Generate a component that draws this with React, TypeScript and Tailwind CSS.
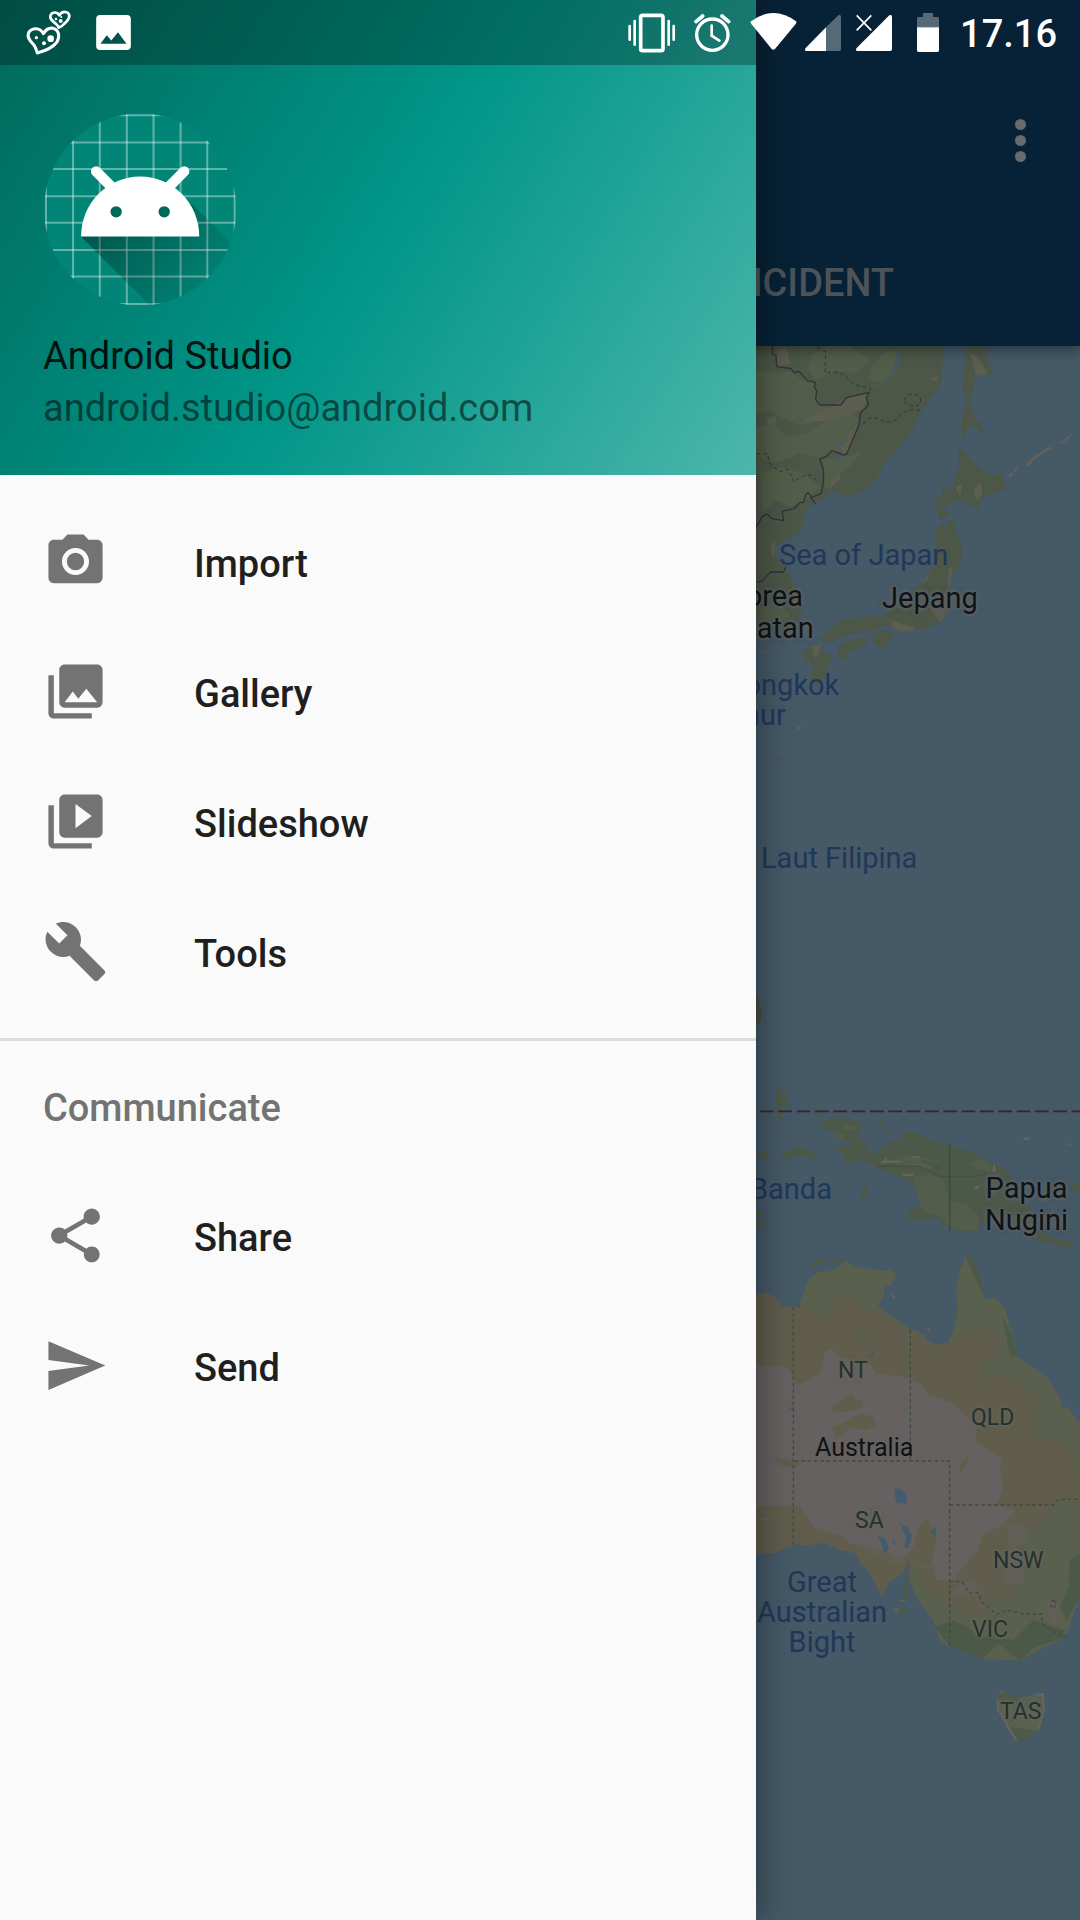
import React from "react";

const menuMain = [
  {
    label: "Import",
    d: "M12 8.8a3.2 3.2 0 1 0 0 6.4 3.2 3.2 0 0 0 0-6.4zM9 2L7.17 4H4c-1.1 0-2 .9-2 2v12c0 1.1.9 2 2 2h16c1.1 0 2-.9 2-2V6c0-1.1-.9-2-2-2h-3.17L15 2H9zm3 15c-2.76 0-5-2.24-5-5s2.24-5 5-5 5 2.24 5 5-2.24 5-5 5z",
  },
  {
    label: "Gallery",
    d: "M22 16V4c0-1.1-.9-2-2-2H8c-1.1 0-2 .9-2 2v12c0 1.1.9 2 2 2h12c1.1 0 2-.9 2-2zM11 12l2.03 2.71L16 11l4 5H8l3-4zM2 6v14c0 1.1.9 2 2 2h14v-2H4V6H2z",
  },
  {
    label: "Slideshow",
    d: "M4 6H2v14c0 1.1.9 2 2 2h14v-2H4V6zM20 2H8c-1.1 0-2 .9-2 2v12c0 1.1.9 2 2 2h12c1.1 0 2-.9 2-2V4c0-1.1-.9-2-2-2zM12 14.5v-9l6 4.5-6 4.5z",
  },
  {
    label: "Tools",
    d: "M22.7 19l-9.1-9.1c.9-2.3.4-5-1.5-6.9-2-2-5-2.4-7.4-1.3L9 6 6 9 1.6 4.7C.4 7.1.9 10.1 2.9 12.1c1.9 1.9 4.6 2.4 6.9 1.5l9.1 9.1c.4.4 1 .4 1.4 0l2.3-2.3c.5-.4.5-1.1.1-1.4z",
  },
];

const menuCommunicate = [
  {
    label: "Share",
    d: "M18 16.08c-.76 0-1.44.3-1.96.77L8.91 12.7c.05-.23.09-.46.09-.7s-.04-.47-.09-.7l7.05-4.11c.54.5 1.25.81 2.04.81 1.66 0 3-1.34 3-3s-1.34-3-3-3-3 1.34-3 3c0 .24.04.47.09.7L8.04 9.81C7.5 9.31 6.79 9 6 9c-1.66 0-3 1.34-3 3s1.34 3 3 3c.79 0 1.5-.31 2.04-.81l7.12 4.16c-.05.21-.08.43-.08.65 0 1.61 1.31 2.92 2.92 2.92s2.92-1.31 2.92-2.92-1.31-2.92-2.92-2.92z",
  },
  { label: "Send", d: "M2.01 21L23 12 2.01 3 2 10l15 2-15 2z" },
];

function MenuItem({ label, d }: { label: string; d: string }) {
  return (
    <li>
      <a href="#" className="flex h-[130px] items-center gap-[86px] px-[43px]">
        <svg viewBox="0 0 24 24" className="mb-0.5 size-[65px] shrink-0 fill-[#737373]" aria-hidden="true">
          <path d={d} />
        </svg>
        <span className="pt-1 font-medium text-[#1f1f1f]">{label}</span>
      </a>
    </li>
  );
}

function AndroidAvatar() {
  const lines = [138, 219, 299, 380, 460, 541, 621, 703];
  return (
    <svg viewBox="129 338 578 578" className="size-[193px]" role="img" aria-label="Profile picture">
      <defs>
        <clipPath id="disc">
          <circle cx="420" cy="627" r="288" />
        </clipPath>
        <linearGradient id="cast" x1="280" y1="650" x2="560" y2="900" gradientUnits="userSpaceOnUse">
          <stop offset="0" stopColor="#000" stopOpacity=".36" />
          <stop offset="1" stopColor="#000" stopOpacity=".05" />
        </linearGradient>
      </defs>
      <g clipPath="url(#disc)">
        <rect x="129" y="338" width="580" height="578" fill="#008577" />
        <g stroke="#fff" strokeOpacity=".38" strokeWidth="6">
          {lines.map((p) => (
            <line key={"v" + p} x1={p} x2={p} y1="338" y2="916" />
          ))}
          {lines.map((p) => (
            <line key={"h" + p} x1="131" x2="709" y1={p + 207} y2={p + 207} />
          ))}
        </g>
        <path d="M243 708L460 925H720V755L575 610Z" fill="url(#cast)" />
      </g>
      <path d="M243 708C243 608 322 528 420 528S597 608 597 708Z" fill="#fff" />
      <path d="M288 513L345 570M552 513L495 570" stroke="#fff" strokeWidth="31" strokeLinecap="round" />
      <circle cx="348" cy="634" r="17" fill="#00695c" />
      <circle cx="492" cy="634" r="17" fill="#00695c" />
    </svg>
  );
}

function StatusBar() {
  return (
    <div className="z-20 flex h-[65px] items-center self-start pr-[23px] pl-[25px] text-white [grid-area:1/1]">
      <svg viewBox="75 27 141 141" className="size-[47px]" fill="none" stroke="#fff" aria-hidden="true">
        <path
          d="M130 101C120 82 96 82 86 98C79 113 92 124 101 134C108 143 109 150 112 159C135 153 158 143 171 126C181 108 176 89 160 85C146 82 136 91 130 101Z"
          strokeWidth="9"
          strokeLinejoin="round"
        />
        <path
          d="M178 46C171 34 154 35 151 48C149 61 160 63 166 70Q174 76 176 83Q185 81 192 72C199 64 209 60 208 46C205 33 186 32 178 46Z"
          strokeWidth="8"
          strokeLinejoin="round"
        />
        <g fill="#fff" stroke="none">
          <circle cx="109" cy="113" r="5" />
          <circle cx="132" cy="130" r="6" />
          <circle cx="152" cy="116" r="10" />
          <circle cx="168" cy="57" r="4" />
          <circle cx="182" cy="63" r="6" />
          <circle cx="184" cy="51" r="3" />
        </g>
      </svg>
      <svg viewBox="288 44 105 106" className="ml-6 size-[35px]" fill="#fff" aria-hidden="true">
        <path fillRule="evenodd" d="M300 44H381Q393 44 393 56V138Q393 150 381 150H300Q288 150 288 138V56Q288 44 300 44ZM301 131H380L354 96L334 121L320 105Z" />
      </svg>

      <svg viewBox="84 36 141 123" className="ml-auto h-[41px] w-[47px]" stroke="#fff" fill="none" aria-hidden="true">
        <rect x="122" y="46" width="67" height="106" rx="6" strokeWidth="11" />
        <path d="M89 78V119M221 78V119M104 63V134M206 63V134" strokeWidth="8" strokeLinecap="round" />
      </svg>
      <svg viewBox="281 36 111 123" className="ml-[19px] h-[41px] w-[37px]" stroke="#fff" fill="none" aria-hidden="true">
        <circle cx="336" cy="104" r="47" strokeWidth="10" />
        <path d="M334 77V107L357 122" strokeWidth="8" strokeLinecap="round" />
        <path d="M287 65L307 48M385 65L365 48" strokeWidth="11" strokeLinecap="round" />
      </svg>
      <svg viewBox="449 36 141 123" className="ml-[19px] h-[41px] w-[47px]" fill="#fff" aria-hidden="true">
        <path d="M450 65Q519 13 589 65L586 72L524 147Q519 152 514 147L453 72Z" />
      </svg>
      <svg viewBox="612 36 108 123" className="ml-2 h-[41px] w-9" fill="#fff" aria-hidden="true">
        <path d="M712 46Q720 42 720 50V148Q720 153 715 153H675V82Z" fillOpacity=".32" />
        <path d="M675 82V153H616Q609 151 614 144Z" />
      </svg>
      <svg viewBox="765 36 108 123" className="ml-[15px] h-[41px] w-9" fill="#fff" aria-hidden="true">
        <path d="M865 46Q873 42 873 50V148Q873 153 868 153H769Q762 151 767 144Z" />
        <path d="M767 46L811 91M811 46L767 91" stroke="#072236" strokeWidth="12" />
        <path d="M767 46L811 91M811 46L767 91" stroke="#fff" strokeWidth="5" />
      </svg>
      <svg viewBox="948 36 66 123" className="ml-[25px] h-[41px] w-[22px]" fill="#fff" aria-hidden="true">
        <path d="M948 82V56Q948 51 953 51H966V39H996V51H1009Q1014 51 1014 56V82Z" fillOpacity=".32" />
        <path d="M948 82H1014V151Q1014 156 1009 156H953Q948 156 948 151Z" />
      </svg>
      <time className="ml-[21px] pt-0.5 font-medium">17.16</time>
    </div>
  );
}

const seaText = "text-[29px] leading-[30px] text-[#21375a]";
const countryText =
  "text-[29px] leading-8 text-[#101214] [text-shadow:0_0_3px_#5b6266,0_0_4px_#5b6266,0_0_5px_#5b6266,0_0_6px_#5b6266]";
const stateText = "text-[23px] leading-6 text-[#23312f] [text-shadow:0_0_4px_#66675c,0_0_5px_#66675c]";

const mapLabels = [
  { text: "Sea of Japan", cls: seaText + " left-[23px] top-[194px]" },
  { text: "Korea\nSelatan", cls: countryText + " left-[-41px] top-[234px] w-[101px]" },
  { text: "Jepang", cls: countryText + " left-[126px] top-[236px]" },
  { text: "Laut Tiongkok\nTimur", cls: seaText + " left-[-115px] top-[324px] w-[200px] pl-[14px]" },
  { text: "Laut Filipina", cls: seaText + " left-[5px] top-[497px]" },
  { text: "Laut Banda", cls: seaText + " left-[-74px] top-[828px] w-[150px] text-right" },
  { text: "Papua\nNugini", cls: countryText + " left-[229px] top-[826px]" },
  { text: "NT", cls: stateText + " left-[82px] top-[1013px]" },
  { text: "QLD", cls: stateText + " left-[215px] top-[1060px]" },
  { text: "Australia", cls: "text-[25px] leading-6 text-[#101214] left-[59px] top-[1090px]" },
  { text: "SA", cls: stateText + " left-[99px] top-[1163px]" },
  { text: "NSW", cls: stateText + " left-[237px] top-[1203px]" },
  { text: "VIC", cls: stateText + " left-[216px] top-[1272px]" },
  { text: "TAS", cls: stateText + " left-[244px] top-[1354px]" },
  { text: "Great\nAustralian\nBight", cls: seaText + " left-[-5px] top-[1221px] w-[142px]" },
];

function MapDrawing() {
  return (
    <svg
      viewBox="756 346 324 1574"
      preserveAspectRatio="xMinYMin slice"
      className="absolute inset-0 size-full"
      aria-hidden="true"
    >
      {/* East Asia */}
      <g transform="translate(740 340) scale(.33333)">
        <g fill="#4c5748">
          <path d="M40 10H610L608 60L605 115L597 150L578 168L560 195L530 240L520 265L490 310L460 340L440 362L425 385L412 415L385 440L350 463L325 472L300 460L290 462L275 450L265 462L250 480L225 488L205 500L190 530L190 550L180 572L150 600L128 602L105 622L110 655L135 680L148 710L165 730L175 770L185 800L180 835L150 860L100 880L48 890Z" />
          <path d="M680 10H735L745 65L760 112L735 98L705 112L698 150L690 178L695 205L712 245L725 250L730 278L712 265L695 252L680 275L670 296L663 270L666 235L672 205L683 180L668 150L672 100Z" />
          <path d="M655 325L675 335L690 355L712 378L740 398L765 408L792 396L788 420L802 445L780 455L740 465L722 485L715 511L690 495L662 482L635 487L608 505L630 518L612 535L595 535L593 505L585 500L587 475L605 468L608 443L640 450L645 405L658 385Z" />
          <path d="M625 540L648 541L645 570L662 605L668 640L655 680L640 695L628 720L628 770L620 825L590 855L570 858L550 873L520 870L480 875L455 855L440 860L430 858L400 875L350 878L310 888L270 908L238 897L270 870L300 843L330 835L360 832L390 828L430 832L450 810L490 780L530 745L560 710L580 670L590 610L585 580L605 550L625 560Z" />
          <path d="M296 915L350 895L385 893L372 918L340 930L325 940L310 962L295 952Z" />
          <path d="M397 885L440 870L466 885L445 905L430 928L400 912Z" />
          <path d="M186 935L235 908L243 930L277 950L262 985L255 1008L235 1037L210 1025L220 985L205 960L192 970Z" />
          <path d="M170 1162L186 1159L178 1170Z" fill="#62645a" />
          <path d="M115 1242L138 1228L128 1242L116 1246Z" fill="#5c5e55" />
        </g>
        <g fill="#535e4a">
          <path d="M48 90L120 100L150 92L185 120L228 128L235 195L300 195L280 230L220 245L180 255L130 235L85 215L48 220Z" />
          <path d="M215 45L262 18H330L390 60L350 100L290 92L250 110L225 120L205 85Z" />
          <path d="M395 80L430 40L470 30L465 90L425 130L385 118Z" />
          <path d="M48 260L100 250L140 290L200 280L260 240L340 220L360 240L330 330L280 335L240 355L180 340L110 370L48 350Z" />
          <path d="M60 400L120 380L190 400L240 440L210 470L150 500L110 480L65 520Z" />
          <path d="M250 360L330 345L370 330L330 380L290 410L275 445L255 440Z" />
          <path d="M60 800L120 780L150 830L90 870L55 860Z" />
        </g>
        <g fill="#5c5e50">
          <path d="M265 205L320 175L385 160L370 205L330 225L280 240L190 248L225 220Z" />
          <path d="M110 30L140 22L150 70L112 80Z" />
          <path d="M80 232L108 228L110 250L85 255Z" />
          <path d="M300 320L350 250L330 330L310 345Z" />
          <path d="M570 115L595 108L590 125Z" />
          <path d="M690 35L715 55L742 100L708 108Z" />
          <path d="M645 440L668 430L660 470Z" />
          <path d="M700 450L722 425L728 460L712 485Z" />
          <path d="M270 425L300 400L300 420L275 438Z" />
          <path d="M94 610L105 605L105 655L92 640Z" />
          <path d="M625 685L640 680L628 745L565 800L600 845L625 815Z" />
          <path d="M455 840L480 850L522 862L520 874L480 875L455 862Z" />
          <path d="M540 735L568 700L562 720Z" />
          <path d="M215 920L243 910L235 945L222 955Z" />
          <path d="M55 935L80 930L65 941Z" />
        </g>
        <g fill="none" stroke="#66605a" strokeWidth="7">
          <path d="M808 410L832 384" strokeDasharray="16 6" />
          <path d="M862 376Q885 345 934 322" strokeWidth="8" />
          <path d="M962 311L994 285" strokeWidth="6" />
        </g>
        <g fill="#43596a">
          <path d="M470 40L484 35L478 70L468 95L455 100Z" />
          <path d="M278 318L316 306L300 320Z" />
          <path d="M284 335L310 348L288 362Z" />
          <path d="M176 220L190 255L184 248Z" />
        </g>
        <path d="M462 95Q445 130 400 138" fill="none" stroke="#46606b" strokeWidth="3" />
        <g fill="none" stroke="#31333a" strokeWidth="4" strokeLinejoin="round">
          <path d="M97 18V42L108 48L110 80L153 86L163 98L178 94L202 122L226 127L223 142L230 152L227 178L238 195L302 195L320 173L388 157L379 174L386 195L362 218L357 255L320 342L310 345L276 332L258 350L239 356L251 392L250 430L244 460L216 472L204 458L197 465L190 487L180 488L164 505L127 514L130 542L95 535L81 522L67 530L48 562" />
          <path d="M210 470L229 494M48 727L68 722L92 696H130L138 680" />
          <g strokeDasharray="11 9" strokeWidth="3">
            <path d="M230 22L256 35V100Q290 88 320 110Q340 142 390 142L394 155" />
            <path d="M370 252Q390 222 425 240Q460 258 480 225Q510 200 550 215M492 180Q510 150 540 170Q550 210 500 192Z" />
            <path d="M50 341H82L88 370L120 396L145 388L162 427Q190 400 215 407L236 428" />
          </g>
        </g>
      </g>

      {/* Indonesia, New Guinea and Australia */}
      <g transform="translate(740 1040) scale(.33333)">
        <path d="M45 -150Q55 -125 67 -80L60 -55L48 -40Z" fill="#465041" />
        <g fill="#4d5948">
          <path d="M230 258L265 237L300 231L340 240L365 250L360 285L365 305L385 320L400 348L420 330L450 305L485 297L481 285L500 274L530 278L575 305L640 318L700 340L740 360L790 385L815 410L815 445L870 500L890 560L930 590L990 605L1002 625L960 618L900 605L860 570L800 535L760 540L720 550L718 570L690 577L630 570L590 532L540 543L503 540L506 510L545 500L535 460L515 430L470 405L400 382L375 365L345 355L330 374L316 365L310 340L283 328L310 318L345 305L290 300L280 272L245 268Z" />
          <path d="M125 335L180 323L220 332L234 362L205 350L165 346L130 360Z" />
          <path d="M103 160L117 135L124 160L152 152L138 175L148 202L126 195L122 215L133 243L112 228L110 190Z" />
          <path d="M136 125L144 116L142 136Z" />
          <path d="M48 340L85 337L80 360L50 355Z" />
          <path d="M100 275L122 270L120 279ZM194 289L214 283L208 292ZM415 240L433 247L441 262L426 257ZM425 280L465 284L440 288ZM218 220L248 220L235 231ZM88 230L112 235L100 239ZM243 522L266 500L258 520ZM360 460L375 436L387 432L384 460L368 482Z" />
          <path d="M48 515L76 514L65 525H48ZM48 547L90 543L68 558L48 568ZM1000 428L1020 430V455L985 455Z" />
        </g>
        <g fill="#525d4c">
          <path d="M690 370L720 355L755 370L750 395L700 385Z" />
          <path d="M430 365L500 345L560 355L590 380L560 390L500 375Z" />
          <path d="M520 410L570 400L610 420L630 480L680 495L720 530L715 572L640 570L600 530L545 510Z" />
          <path d="M290 275L312 285L305 302L290 298ZM310 250L350 260L345 270L310 268Z" />
        </g>
        <path d="M440 352V362H487L478 368L420 370ZM515 349H540V354H515ZM488 402H520V408H490ZM762 368L770 392L755 396ZM700 440L722 436L710 450Z" fill="#66655d" />
        <path d="M410 378L540 380L600 410L700 410L740 400M545 360L600 385" fill="none" stroke="#465043" strokeWidth="4" />
        <path d="M850 292H872L868 300H850ZM980 310L995 312L988 318Z" fill="#66625d" />
        <path d="M554 385L566 400L560 405ZM566 455L572 450L568 475Z" fill="#43596a" />

        <path
          d="M48 765L80 757L105 770L130 800L160 798L178 805L185 780L195 745L207 735L212 712L235 697L275 693L300 688L315 663L345 680L425 692L450 688L470 705L455 735L432 742L432 770L412 795L450 825L510 865L555 885L558 900L590 915L625 905L643 865L655 805L648 760L655 705L662 680L674 665L682 637L697 655L722 720L732 778L750 785L765 773L795 805L798 850L820 890L832 950L860 975L890 990L920 1010L940 1045L958 1070L965 1105L980 1100L1020 1150V1670L1005 1680L980 1740L977 1790L920 1805L880 1825L838 1862L800 1835L775 1812L765 1835L728 1857L680 1830L630 1820L600 1805L580 1740L540 1690L520 1650L508 1620L505 1560L490 1600L450 1625L425 1668L415 1650L400 1620L385 1595L362 1570L345 1540L300 1530L250 1508L220 1514L160 1515L100 1540L48 1543Z"
          fill="#605d4d"
        />
        <path d="M48 975L120 977L145 985L170 1035L200 1022L240 1000L255 935L270 925L300 950L330 958L390 970L405 1000L500 1012L540 1030L565 1065L640 1090L710 1160L705 1205L760 1240L790 1255L780 1290L790 1350L770 1395L830 1410L780 1460L730 1480L715 1530L680 1570L640 1620L590 1620L575 1570L590 1500L565 1435L540 1450L520 1520L480 1570L430 1530L330 1510L300 1485L220 1460L180 1400L120 1395L90 1440L48 1440Z" fill="#656160" />
        <g fill="#605d4d">
          <path d="M275 1095L300 1085L335 1060L350 1078L375 1080L365 1105L320 1115L280 1118ZM275 1160L320 1145L360 1120L400 1130L410 1155L380 1170L330 1165L290 1195ZM100 1250L130 1255L180 1265L165 1285L120 1275Z" />
          <path d="M655 1285L690 1235L685 1260L665 1295ZM780 1280L800 1300L790 1330L830 1320L850 1300L895 1320L885 1345L855 1340L840 1370L770 1390L795 1340ZM48 1400L110 1395L150 1430L120 1450L80 1430L48 1440ZM165 1410L210 1430L185 1450ZM545 1300L558 1285L555 1302Z" />
        </g>
        <g fill="#5a604e">
          <path d="M212 712L235 697L275 693L315 663L345 680L425 692L470 705L432 742L412 795L450 825L510 865L555 885L558 900L500 870L420 820L360 790L330 765L275 760L265 790L290 810L260 830L195 810L178 795L195 745Z" />
          <path d="M657 700L682 637L722 720L732 780L765 773L795 805L820 890L832 950L920 1010L940 1045L965 1105L1020 1150V1350L1000 1290L1000 1180L930 1150L900 1070L860 1040L820 1010L790 1000L740 1010L720 980L780 940L780 890L740 865L680 870L640 905L625 905L645 860L655 800Z" />
          <path d="M875 1100L900 1120L960 1130L1000 1200L1020 1180V1260L990 1240L960 1200L910 1200L880 1160ZM960 1370L1020 1380V1670L977 1790L838 1862L728 1857L600 1805L580 1740L520 1650L512 1570L540 1610L560 1650L640 1710L720 1730L760 1680L815 1670L825 1620L850 1600L850 1480L910 1460L935 1410Z" />
          <path d="M345 860L380 870L420 900L400 905L350 885Z" />
        </g>
        <g fill="#4d5948">
          <path d="M682 637L697 655L720 700L728 765L700 700L678 655ZM785 830L798 850L820 890L832 950L810 950L800 890ZM990 1560L1020 1540V1670L980 1740L960 1700L985 1640ZM585 1760L640 1740L680 1760L720 1790L820 1800L880 1740L970 1770L977 1790L880 1825L838 1862L775 1812L728 1857L630 1820Z" />
        </g>
        <path d="M800 1460L840 1450L865 1475L860 1500L830 1520L855 1560L850 1630L800 1630L790 1580L810 1520ZM640 1640L700 1620L720 1660L690 1670L640 1660ZM920 1680L955 1690L950 1760L925 1740Z" fill="#625f59" />
        <path d="M345 1515L380 1520L450 1540L500 1570L470 1575L400 1550ZM520 1560L560 1575L600 1580L590 1595L540 1580Z" fill="#5f6050" />
        <g fill="#435b6c">
          <path d="M463 1350L475 1343L500 1362L498 1380L503 1395L485 1388L472 1392L466 1375Z" />
          <path d="M480 1450L505 1465L516 1490L505 1525L494 1523L498 1490ZM413 1488L435 1495L447 1525L436 1543L425 1515ZM571 1475L591 1455L586 1492ZM386 948L403 934L402 950ZM705 1025L722 1000L715 1015ZM138 1113L160 1098V1110ZM455 1496L466 1508L462 1515Z" />
        </g>
        <g fill="#4e5a49">
          <path d="M205 675L235 655L258 658L250 670L220 680ZM280 650L305 660L300 675L283 662Z" />
          <path d="M772 1960L790 1953L830 1973L860 1970L890 1962L910 1960L912 2020L898 2075L882 2070L865 2100L830 2103L800 2055L775 2000Z" fill="#5a6151" />
          <path d="M775 1962L800 1955L840 1975L835 1985L775 1980ZM810 2060L880 2070L865 2100L835 2103Z" />
          <path d="M740 1902L750 1905L745 1920ZM895 1908L910 1925L905 1935ZM905 1930L915 1938L908 1938ZM890 2072L900 2080L892 2083Z" />
          <path d="M470 1712L495 1709L515 1712L480 1724ZM498 1610L510 1625L500 1680L475 1685L490 1675Z" />
        </g>
        <path d="M772 1982L775 2010L800 2055L828 2100M885 1965L908 1961L912 2010L895 2065" fill="none" stroke="#69675f" strokeWidth="5" />
        <path d="M452 762L466 768L460 776ZM558 870L572 862L566 875ZM460 1708L478 1705L470 1718ZM472 1682L498 1678V1684H472Z" fill="#66625a" />
        <g fill="none" stroke="#3b4c42" strokeWidth="4" strokeDasharray="11 8">
          <path d="M160 800V1515M511 868V1263M165 1263H629V1820M629 1395H940L955 1378H1020" />
          <path d="M629 1625H665L690 1660L715 1658L725 1685L770 1723L800 1710L850 1722H905V1750L940 1775L977 1790M940 1680Q955 1690 938 1708Q928 1690 940 1680" />
        </g>
        <path d="M629 315V573" stroke="#3c473d" strokeWidth="4" />
        <path d="M60 214H1020" stroke="#3f2028" strokeWidth="5" strokeDasharray="41 14" />
      </g>
    </svg>
  );
}

export default function App() {
  return (
    <div className="grid min-h-screen grid-cols-1 overflow-hidden bg-[#455967] text-[38px] leading-[52px] font-[Roboto,sans-serif]">
      <div className="flex flex-col [grid-area:1/1]">
        <header className="relative z-10 flex flex-col bg-[#072236] pt-[65px] shadow-[0_2px_14px_rgba(0,0,0,0.5)]">
          <div className="flex h-[151px] items-center justify-end pr-[46px]">
            <button type="button" aria-label="More options" className="flex w-7 flex-col items-center gap-[5px]">
              <span className="size-[11px] rounded-full bg-[#6a6a6a]" />
              <span className="size-[11px] rounded-full bg-[#6a6a6a]" />
              <span className="size-[11px] rounded-full bg-[#6a6a6a]" />
            </button>
          </div>
          <div className="flex h-[130px] items-center justify-end pr-[186px]">
            <button type="button" className="pt-1 font-medium text-[#4c5359]">
              INCIDENT
            </button>
          </div>
        </header>
        <main className="relative ml-[70%] grow">
          <MapDrawing />
          {mapLabels.map((l) => (
            <p key={l.text} className={"absolute text-center whitespace-pre " + l.cls}>
              {l.text}
            </p>
          ))}
        </main>
      </div>

      <aside className="z-10 flex w-[70%] flex-col bg-[#fafafa] shadow-[0_0_36px_rgba(0,0,0,0.45)] [grid-area:1/1]">
        <div className="bg-[linear-gradient(122deg,#00695c,#009688_50%,#4db6ac)]">
          <div className="h-[65px] bg-black/27" />
          <div className="flex flex-col px-[43px] pt-12 pb-[41px]">
            <AndroidAvatar />
            <p className="mt-6 text-black/87">Android Studio</p>
            <p className="text-black/54">android.studio@android.com</p>
          </div>
        </div>
        <nav className="pt-[22px]">
          <ul>
            {menuMain.map((m) => (
              <MenuItem key={m.label} {...m} />
            ))}
          </ul>
          <hr className="mt-[21px] border-t-3 border-[#dcdcdc]" />
          <h2 className="flex h-[130px] items-center px-[43px] pt-1 font-medium text-[#737373]">Communicate</h2>
          <ul>
            {menuCommunicate.map((m) => (
              <MenuItem key={m.label} {...m} />
            ))}
          </ul>
        </nav>
      </aside>

      <StatusBar />
    </div>
  );
}
